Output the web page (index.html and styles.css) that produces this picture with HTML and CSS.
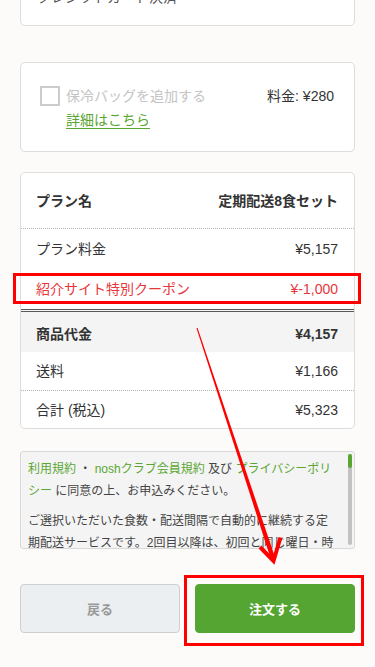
FILE: index.html
```html
<!DOCTYPE html>
<html lang="ja">
<head>
<meta charset="utf-8">
<title>ご注文内容の確認</title>
<link rel="stylesheet" href="styles.css">
</head>
<body>
<main class="page">
  <section class="card card-pay">
    <p class="pay-method">クレジットカード決済</p>
  </section>

  <section class="card card-option">
    <div class="option-main">
      <label class="option-check">
        <span class="checkbox"></span>
        <span class="option-label">保冷バッグを追加する</span>
      </label>
      <a class="option-link" href="#">詳細はこちら</a>
    </div>
    <div class="option-price">料金: ¥280</div>
  </section>

  <section class="card card-summary">
    <div class="row row-head">
      <span class="bold">プラン名</span>
      <span class="bold">定期配送8食セット</span>
    </div>
    <div class="row row-plain">
      <span>プラン料金</span>
      <span>¥5,157</span>
    </div>
    <div class="row row-plain row-coupon">
      <span>紹介サイト特別クーポン</span>
      <span>¥-1,000</span>
    </div>
    <div class="row row-subtotal">
      <span class="bold">商品代金</span>
      <span class="bold">¥4,157</span>
    </div>
    <div class="row row-ship">
      <span>送料</span>
      <span>¥1,166</span>
    </div>
    <div class="row row-total">
      <span>合計 (税込)</span>
      <span>¥5,323</span>
    </div>
  </section>

  <section class="terms">
    <div class="terms-text">
      <p><a href="#">利用規約</a> ・ <a href="#">noshクラブ会員規約</a> 及び <a href="#">プライバシーポリシー</a> に同意の上、お申込みください。</p>
      <p>ご選択いただいた食数・配送間隔で自動的に継続する定期配送サービスです。2回目以降は、初回と同じ曜日・時間帯にお届けいたします。</p>
      <p>配送スキップ・メニュー変更・プラン変更・解約はマイページよりいつでもお手続きいただけます。</p>
    </div>
    <div class="scrollbar"><div class="scroll-thumb"></div></div>
  </section>

  <div class="actions">
    <button class="btn btn-back" type="button">戻る</button>
    <button class="btn btn-order" type="button">注文する</button>
  </div>
</main>

<svg class="annotation-arrow" width="375" height="667" viewBox="0 0 375 667" aria-hidden="true">
  <polygon points="196.5,328.2 197.5,327.8 275.2,557.8 270.9,559.2" fill="#ff0000"/>
  <polyline points="260,547 273.5,561 280.5,537.5" fill="none" stroke="#ff0000" stroke-width="4"/>
</svg>
</body>
</html>
```

FILE: styles.css
```css
* {
  box-sizing: border-box;
}

html, body {
  margin: 0;
  padding: 0;
}

body {
  position: relative;
  min-height: 667px;
  overflow: hidden;
  background: #fcfbf9;
  color: #333;
  font-family: "Liberation Sans", "Noto Sans CJK JP", sans-serif;
  font-size: 14px;
  line-height: 20px;
}

p {
  margin: 0;
}

a {
  color: #5aa632;
}

.page {
  display: flex;
  flex-direction: column;
  padding: 0 20px 40px;
}

.card {
  background: #fff;
  border: 1px solid #dddddd;
  border-radius: 5px;
}

.card-pay {
  margin-top: -28px;
  padding: 14px 16px 18px;
}

.pay-method {
  color: #555;
  font-size: 14px;
  line-height: 20px;
}

.card-option {
  margin-top: 36px;
  padding: 23px 20px 21px 19px;
  display: flex;
  justify-content: space-between;
  align-items: flex-start;
}

.option-main {
  display: flex;
  flex-direction: column;
  gap: 4px;
}

.option-check {
  display: flex;
  align-items: center;
  gap: 6px;
  height: 20px;
}

.checkbox {
  width: 20px;
  height: 20px;
  border: 2px solid #cccccc;
  background: #fff;
}

.option-label {
  color: #c4c4c4;
}

.option-link {
  margin-left: 26px;
  text-decoration: underline;
  text-underline-offset: 3px;
}

.option-price {
  color: #333;
  line-height: 20px;
}

.card-summary {
  margin-top: 20px;
  overflow: visible;
}

.row {
  display: flex;
  justify-content: space-between;
  align-items: center;
  padding: 0 16px 0 15px;
  line-height: 20px;
}

.bold {
  font-weight: bold;
}

.row-head {
  height: 56px;
  padding-top: 1px;
  border-bottom: 1px dotted #b5b5b5;
}

.row-plain {
  height: 40px;
}

.row-coupon {
  position: relative;
  color: #e8363c;
}

.row-coupon::after {
  content: "";
  position: absolute;
  left: -8px;
  right: -7px;
  top: 4px;
  bottom: 5px;
  border: 3px solid #ff0000;
}

.row-subtotal {
  height: 43px;
  padding-top: 3px;
  background: #f4f4f4;
  border-top: 3px double #5a5a5a;
}

.row-ship {
  height: 39px;
  border-bottom: 1px dotted #b5b5b5;
}

.row-total {
  height: 37px;
}

.terms {
  margin-top: 22px;
  height: 98px;
  display: flex;
  background: #f4f4f4;
  border: 1px solid #d8d8d8;
  border-radius: 3px;
  overflow: hidden;
}

.terms-text {
  flex: 1;
  padding: 6px 10px 0 7px;
  font-size: 12px;
  line-height: 22px;
  color: #444;
  overflow: hidden;
}

.terms-text p + p {
  margin-top: 8px;
}

.terms-text a {
  text-decoration: none;
}

.scrollbar {
  width: 4px;
  margin: 2px 2px 3px 0;
  background: #c2c2c2;
  border-radius: 2px;
}

.scroll-thumb {
  height: 14px;
  background: #5aa632;
  border-radius: 2px;
}

.actions {
  margin-top: 35px;
  display: flex;
  gap: 15px;
}

.btn {
  flex: 1;
  height: 49px;
  border-radius: 4px;
  font-family: "Liberation Sans", "Noto Sans CJK JP", sans-serif;
  font-size: 13px;
  font-weight: bold;
  cursor: pointer;
}

.btn-back {
  background: #eceff1;
  border: 1px solid #cfcfcf;
  color: #999;
}

.btn-order {
  position: relative;
  background: #55a532;
  border: 1px solid #55a532;
  color: #fff;
}

.btn-order::after {
  content: "";
  position: absolute;
  left: -12px;
  right: -10px;
  top: -10px;
  bottom: -14px;
  border: 3px solid #ff0000;
}

.annotation-arrow {
  position: absolute;
  left: 0;
  top: 0;
  pointer-events: none;
}
```
